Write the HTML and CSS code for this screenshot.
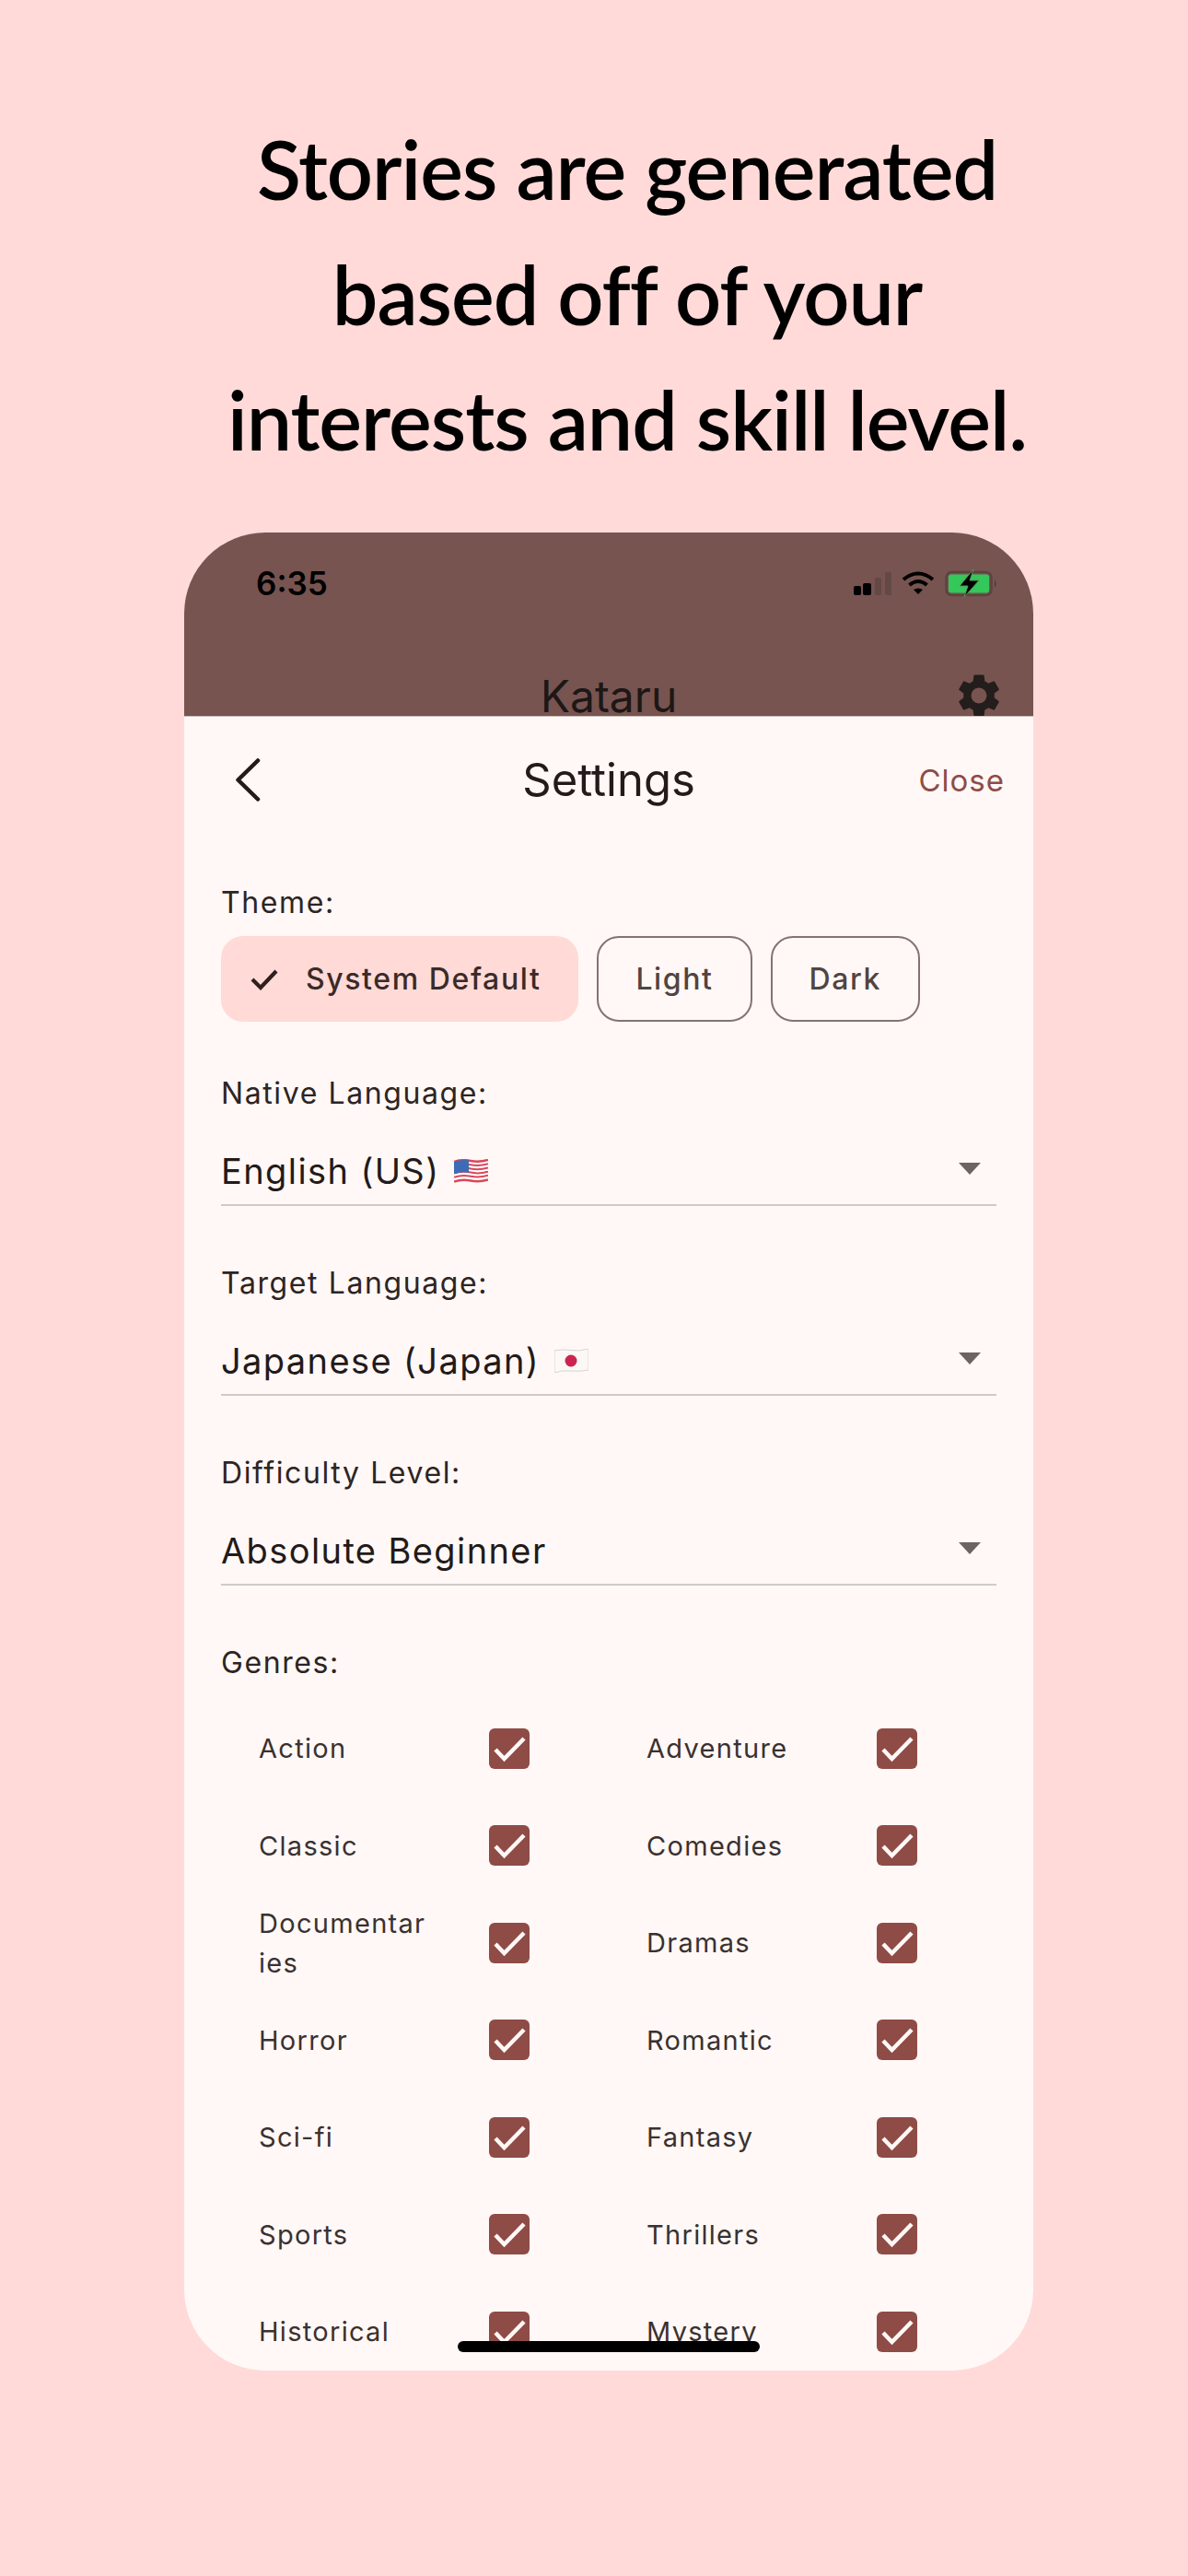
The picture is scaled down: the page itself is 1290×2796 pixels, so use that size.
FILE: index.html
```html
<!DOCTYPE html>
<html lang="en">
<head>
    <meta charset="UTF-8">
    <meta name="viewport" content="width=device-width, initial-scale=1.0">
    <title>Kataru Settings</title>
    <link rel="stylesheet" href="styles.css">
</head>
<body>

    <svg class="sprite">
        <symbol id="box" viewBox="0 0 44 44">
            <rect width="44" height="44" rx="6" fill="#8f4b46"/>
            <path d="M7 23 L16.5 33 L38 11" fill="none" stroke="#fff8f6" stroke-width="4.5"/>
        </symbol>
        <symbol id="arrow" viewBox="0 0 24 14">
            <path d="M0 0 H24 L12 13 Z" fill="#6b6462"/>
        </symbol>
    </svg>

    <h1 class="headline">Stories are generated<br>based off of your<br>interests and skill level.</h1>

    <div class="phone">
        <div class="appbar">
            <div class="status">
                <span class="time">6:35</span>
                <div class="status-icons">
                    <svg width="41" height="25" viewBox="0 0 41 25">
                        <rect x="0" y="15" width="8" height="10" rx="2" fill="#000"/>
                        <rect x="10" y="12" width="9" height="13" rx="2" fill="#000"/>
                        <rect x="23" y="6" width="7" height="19" rx="2" fill="#634845"/>
                        <rect x="34" y="0" width="7" height="25" rx="2" fill="#634845"/>
                    </svg>
                    <svg width="36" height="26" viewBox="0 0 36 26">
                        <path d="M2 9 Q18 -4 34 9" fill="none" stroke="#000" stroke-width="4"/>
                        <path d="M8.5 15 Q18 7 27.5 15" fill="none" stroke="#000" stroke-width="4"/>
                        <path d="M13 20 Q18 17 23 20 L18 25 Z" fill="#000"/>
                    </svg>
                    <svg width="58" height="30" viewBox="0 0 58 30">
                        <rect x="1.5" y="3" width="49" height="25" rx="6" fill="none" stroke="#5c4340" stroke-width="2.5"/>
                        <rect x="4" y="5.5" width="44" height="20" rx="3" fill="#34c759"/>
                        <path d="M54 11 Q57 15.5 54 20 Z" fill="#4e3836"/>
                        <path d="M31 0 L16 18 H25 L21 30 L37 12 H27 Z" fill="#000" stroke="#5c8f5f" stroke-width="1"/>
                    </svg>
                </div>
            </div>
            <div class="appbar-title">
                <span></span>
                <span class="app-name">Kataru</span>
                <svg class="gear" viewBox="0 0 24 24">
                    <path fill="#231d1c" d="M19.14 12.94c.04-.3.06-.61.06-.94 0-.32-.02-.64-.07-.94l2.03-1.58a.49.49 0 0 0 .12-.61l-1.92-3.32a.488.488 0 0 0-.59-.22l-2.39.96c-.5-.38-1.03-.7-1.62-.94l-.36-2.54a.484.484 0 0 0-.48-.41h-3.84c-.24 0-.43.17-.47.41l-.36 2.54c-.59.24-1.13.57-1.62.94l-2.39-.96c-.22-.08-.47 0-.59.22L2.74 8.87c-.12.21-.08.47.12.61l2.03 1.58c-.05.3-.09.63-.09.94s.02.64.07.94l-2.03 1.58a.49.49 0 0 0-.12.61l1.92 3.32c.12.22.37.29.59.22l2.39-.96c.5.38 1.03.7 1.62.94l.36 2.54c.05.24.24.41.48.41h3.84c.24 0 .44-.17.47-.41l.36-2.54c.59-.24 1.13-.56 1.62-.94l2.39.96c.22.08.47 0 .59-.22l1.92-3.32c.12-.22.07-.47-.12-.61l-2.01-1.58zM12 15.6c-1.98 0-3.6-1.62-3.6-3.6s1.62-3.6 3.6-3.6 3.6 1.62 3.6 3.6-1.62 3.6-3.6 3.6z"/>
                </svg>
            </div>
        </div>

        <div class="sheet">
            <div class="sheet-header">
                <svg class="back" width="28" height="47" viewBox="0 0 28 47">
                    <path d="M25 2.5 L3.5 23.5 L25 44.5" fill="none" stroke="#231a19" stroke-width="4.5" stroke-linecap="round" stroke-linejoin="round"/>
                </svg>
                <span class="sheet-title">Settings</span>
                <span class="close">Close</span>
            </div>

            <div class="sheet-body">
                <div class="field">
                    <div class="label">Theme:</div>
                    <div class="chips">
                        <div class="chip chip-selected">
                            <svg width="30" height="24" viewBox="0 0 30 24">
                                <path d="M2 12 L11 21 L28 3" fill="none" stroke="#2f1f1d" stroke-width="4.2"/>
                            </svg>
                            System Default
                        </div>
                        <div class="chip">Light</div>
                        <div class="chip">Dark</div>
                    </div>
                </div>

                <div class="field field-select">
                    <div class="label">Native Language:</div>
                    <div class="select">
                        <span class="value">English (US)</span>
                        <svg class="flag" width="37" height="27" viewBox="0 0 37 27">
                            <path d="M0 3 Q9 0 18 2 T37 1 V23 Q28 26 18 24 T0 26 Z" fill="#fff"/>
                            <path d="M0 3 Q9 0 18 2 T37 1" fill="none" stroke="#d9475a" stroke-width="2.6"/>
                            <path d="M0 7.2 Q9 4.2 18 6.2 T37 5.2" fill="none" stroke="#d9475a" stroke-width="2"/>
                            <path d="M0 11.4 Q9 8.4 18 10.4 T37 9.4" fill="none" stroke="#d9475a" stroke-width="2"/>
                            <path d="M0 15.6 Q9 12.6 18 14.6 T37 13.6" fill="none" stroke="#d9475a" stroke-width="2"/>
                            <path d="M0 19.8 Q9 16.8 18 18.8 T37 17.8" fill="none" stroke="#d9475a" stroke-width="2"/>
                            <path d="M0 24.5 Q9 21.5 18 23.5 T37 22.5" fill="none" stroke="#d9475a" stroke-width="2.6"/>
                            <path d="M0 3 Q9 0 16 1.6 V14.8 Q8 13.2 0 16 Z" fill="#3b6cb5"/>
                        </svg>
                        <svg class="arrow"><use href="#arrow"/></svg>
                    </div>
                </div>

                <div class="field field-select">
                    <div class="label">Target Language:</div>
                    <div class="select">
                        <span class="value">Japanese (Japan)</span>
                        <svg class="flag" width="37" height="26" viewBox="0 0 37 26">
                            <path d="M0 2 Q9 0 18 1.5 T37 0 V23 Q28 25 18 24 T0 26 Z" fill="#fbf8f6" stroke="#d8d3d0" stroke-width="1"/>
                            <circle cx="18" cy="13" r="6.5" fill="#cc2450"/>
                        </svg>
                        <svg class="arrow"><use href="#arrow"/></svg>
                    </div>
                </div>

                <div class="field field-select">
                    <div class="label">Difficulty Level:</div>
                    <div class="select">
                        <span class="value">Absolute Beginner</span>
                        <svg class="arrow"><use href="#arrow"/></svg>
                    </div>
                </div>

                <div class="field">
                    <div class="label">Genres:</div>
                    <div class="genres">
                        <div class="genre"><span>Action</span><svg class="box"><use href="#box"/></svg></div>
                        <div class="genre"><span>Adventure</span><svg class="box"><use href="#box"/></svg></div>
                        <div class="genre"><span>Classic</span><svg class="box"><use href="#box"/></svg></div>
                        <div class="genre"><span>Comedies</span><svg class="box"><use href="#box"/></svg></div>
                        <div class="genre"><span>Documentaries</span><svg class="box"><use href="#box"/></svg></div>
                        <div class="genre"><span>Dramas</span><svg class="box"><use href="#box"/></svg></div>
                        <div class="genre"><span>Horror</span><svg class="box"><use href="#box"/></svg></div>
                        <div class="genre"><span>Romantic</span><svg class="box"><use href="#box"/></svg></div>
                        <div class="genre"><span>Sci-fi</span><svg class="box"><use href="#box"/></svg></div>
                        <div class="genre"><span>Fantasy</span><svg class="box"><use href="#box"/></svg></div>
                        <div class="genre"><span>Sports</span><svg class="box"><use href="#box"/></svg></div>
                        <div class="genre"><span>Thrillers</span><svg class="box"><use href="#box"/></svg></div>
                        <div class="genre"><span>Historical</span><svg class="box"><use href="#box"/></svg></div>
                        <div class="genre"><span>Mystery</span><svg class="box"><use href="#box"/></svg></div>
                    </div>
                </div>
            </div>
        </div>

        <div class="home-bar"></div>
    </div>

</body>
</html>
```

FILE: styles.css
```css
* {
    box-sizing: border-box;
}
body {
    margin: 0;
    height: 2796px;
    padding-top: 115px;
    background: #ffdad8;
    font-family: Inter, "Liberation Sans", sans-serif;
    overflow: hidden;
}
.sprite {
    display: none;
}
.headline {
    margin: 0 0 55px;
    padding-left: 72px;
    font-family: Lato, sans-serif;
    font-size: 88px;
    font-weight: 600;
    line-height: 136px;
    letter-spacing: -1px;
    text-align: center;
    color: #000;
}
.phone {
    position: relative;
    display: flex;
    flex-direction: column;
    width: 922px;
    height: 1995px;
    margin-left: 200px;
    border-radius: 88px;
    overflow: hidden;
    background: #fff8f6;
}
.appbar {
    display: flex;
    flex-direction: column;
    flex: none;
    height: 199px;
    overflow: hidden;
    background: #775450;
}
.status {
    display: flex;
    flex: none;
    justify-content: space-between;
    align-items: center;
    height: 50px;
    margin-top: 30px;
    padding: 0 38px 0 78px;
}
.time {
    font-size: 35px;
    font-weight: 600;
    color: #000;
}
.status-icons {
    display: flex;
    align-items: center;
    gap: 11px;
}
.appbar-title {
    display: grid;
    flex: none;
    grid-template-columns: 1fr auto 1fr;
    align-items: center;
    height: 56px;
    margin-top: 69px;
    padding: 0 31px;
}
.app-name {
    margin-top: 2px;
    font-size: 48px;
    line-height: 30px;
    color: #1d1716;
}
.gear {
    justify-self: end;
    width: 56px;
    height: 56px;
}
.sheet {
    flex: 1;
    min-height: 0;
    overflow: hidden;
    border-top: 1px solid #cdbfbc;
    color: #231a19;
}
.sheet-header {
    display: grid;
    grid-template-columns: 1fr auto 1fr;
    align-items: center;
    height: 137px;
    padding: 0 31px;
}
.back {
    margin-left: 24px;
}
.sheet-title {
    font-size: 49px;
}
.close {
    justify-self: end;
    font-size: 33px;
    letter-spacing: 1px;
    color: #8f4b46;
}
.sheet-body {
    padding: 41px 40px 0;
}
.field {
    margin-bottom: 54px;
}
.field-select {
    margin-bottom: 60px;
}
.label {
    height: 44px;
    font-size: 32px;
    line-height: 47px;
    letter-spacing: 1.6px;
    color: #2e2423;
}
.chips {
    display: flex;
    gap: 20px;
    margin-top: 16px;
}
.chip {
    display: flex;
    align-items: center;
    height: 93px;
    padding: 0 40px;
    border: 2.5px solid #857371;
    border-radius: 24px;
    font-size: 32px;
    font-weight: 500;
    letter-spacing: 1.6px;
    color: #534341;
}
.chip-selected {
    gap: 30px;
    padding: 0 41px 0 32px;
    border: none;
    background: #ffdad6;
    color: #3a2a28;
}
.select {
    display: flex;
    align-items: center;
    height: 102px;
    padding-top: 28px;
    border-bottom: 2px solid #cfc9c7;
}
.value {
    font-size: 38px;
    letter-spacing: 1.4px;
}
.flag {
    margin-left: 16px;
}
.arrow {
    width: 24px;
    height: 14px;
    margin: -4px 17px 0 auto;
}
.genres {
    display: grid;
    grid-template-columns: 421px 421px;
    grid-auto-rows: 105.5px;
    margin-top: 20px;
}
.genre {
    display: flex;
    align-items: center;
    gap: 64px;
    padding-left: 41px;
    font-size: 29px;
    line-height: 43px;
    letter-spacing: 1.3px;
    color: #3a3130;
}
.genre span {
    width: 186px;
    word-break: break-all;
}
.box {
    flex: none;
    width: 44px;
    height: 44px;
}
.home-bar {
    position: absolute;
    left: 297px;
    bottom: 20px;
    width: 328px;
    height: 12px;
    border-radius: 6px;
    background: #000;
}
```
